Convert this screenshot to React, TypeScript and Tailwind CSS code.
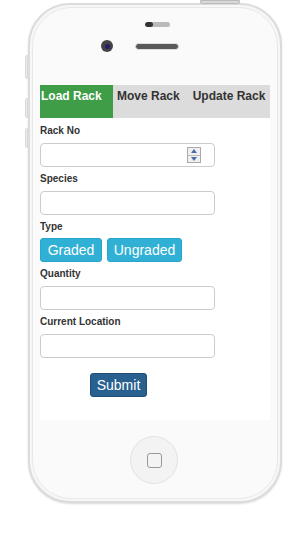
import React from 'react';

const font = { fontFamily: '"Liberation Sans", Arial, sans-serif' };

function Field({ label, spinner }: { label: string; spinner?: boolean }) {
  return (
    <div>
      <label className="block text-[10px] font-bold text-[#333] leading-[12px] mb-[6px]">{label}</label>
      <div className="relative w-[175px] h-[24px] border border-[#ccc] rounded-[4px] bg-white">
        {spinner && (
          <div className="absolute right-[13px] top-[3px] flex flex-col w-[14px] h-[16px] border border-[#aaa] bg-[#f0f0f0]">
            <div className="flex-1 flex items-center justify-center border-b border-[#bbb]">
              <div className="w-0 h-0 border-l-[3px] border-r-[3px] border-b-[4px] border-l-transparent border-r-transparent border-b-[#4a6aa8]" />
            </div>
            <div className="flex-1 flex items-center justify-center">
              <div className="w-0 h-0 border-l-[3px] border-r-[3px] border-t-[4px] border-l-transparent border-r-transparent border-t-[#4a6aa8]" />
            </div>
          </div>
        )}
      </div>
    </div>
  );
}

export default function App() {
  return (
    <div className="w-[285px] h-[539px] bg-white overflow-hidden relative" style={font}>
      {/* power button */}
      <div className="absolute left-[200px] top-0 w-[40px] h-[4px] rounded-b-[2px] bg-[#d8d8d8] border border-[#bbb]" />
      {/* side buttons */}
      <div className="absolute left-[25px] top-[55px] w-[3px] h-[24px] rounded-l-[2px] bg-[#ececec] border border-[#dadada]" />
      <div className="absolute left-[25px] top-[98px] w-[3px] h-[20px] rounded-l-[2px] bg-[#ececec] border border-[#dadada]" />
      <div className="absolute left-[25px] top-[128px] w-[3px] h-[20px] rounded-l-[2px] bg-[#ececec] border border-[#dadada]" />

      <div className="ml-[28px] mt-[3px] w-[254px] h-[500px] rounded-[42px] border-[2px] border-[#dcdcdc] bg-[#f7f7f7] p-[2px] shadow-[0_1px_2px_rgba(0,0,0,0.15)]">
        <div className="relative w-full h-full rounded-[39px] border border-[#e8e8e8] bg-[#fafafa]">
          {/* sensor */}
          <div className="absolute left-[112px] top-[14px] w-[25px] h-[5px] rounded-full bg-[#bbb] overflow-hidden">
            <div className="w-[8px] h-full rounded-full bg-[#333]" />
          </div>
          {/* camera */}
          <div className="absolute left-[68px] top-[32px] w-[12px] h-[12px] rounded-full bg-[#444] flex items-center justify-center">
            <div className="w-[5px] h-[5px] rounded-full bg-[#2a1a6a]" />
          </div>
          {/* speaker */}
          <div className="absolute left-[102px] top-[35px] w-[44px] h-[7px] rounded-full bg-[#5a5a5a] border border-[#e0e0e0]" />

          <div className="ml-[7px] mt-[77px] w-[230px] h-[335px] bg-white">
            <div className="flex h-[33px] bg-[#dcdcdc] text-[12px] font-bold leading-[14px]">
              <div className="w-[73px] bg-[#3f9c47] text-white pl-[1px] pt-[4px]">Load Rack</div>
              <div className="pl-[4px] pt-[4px] text-[#333]">Move Rack</div>
              <div className="pl-[13px] pt-[4px] text-[#333]">Update Rack</div>
            </div>
            <div className="pt-[7px] flex flex-col gap-[6px]">
              <Field label="Rack No" spinner />
              <Field label="Species" />
              <div>
                <label className="block text-[10px] font-bold text-[#333] leading-[12px] mb-[5px]">Type</label>
                <div className="flex gap-[5px]">
                  <button className="w-[62px] h-[24px] rounded-[3px] bg-[#31b0d5] border border-[#2aa5cc] text-white text-[14px] leading-[16px]">Graded</button>
                  <button className="w-[75px] h-[24px] rounded-[3px] bg-[#31b0d5] border border-[#2aa5cc] text-white text-[14px] leading-[16px]">Ungraded</button>
                </div>
              </div>
              <Field label="Quantity" />
              <Field label="Current Location" />
            </div>
            <div className="pl-[50px] pt-[15px]">
              <button className="w-[57px] h-[24px] rounded-[3px] bg-[#286090] border border-[#204d74] text-white text-[14px] leading-[16px]">Submit</button>
            </div>
          </div>

          {/* home button */}
          <div className="absolute left-[97px] top-[428px] w-[48px] h-[48px] rounded-full border border-[#e2e2e2] bg-[#f3f3f3] flex items-center justify-center">
            <div className="w-[15px] h-[15px] rounded-[3px] border-[1.5px] border-[#999]" />
          </div>
        </div>
      </div>
    </div>
  );
}
